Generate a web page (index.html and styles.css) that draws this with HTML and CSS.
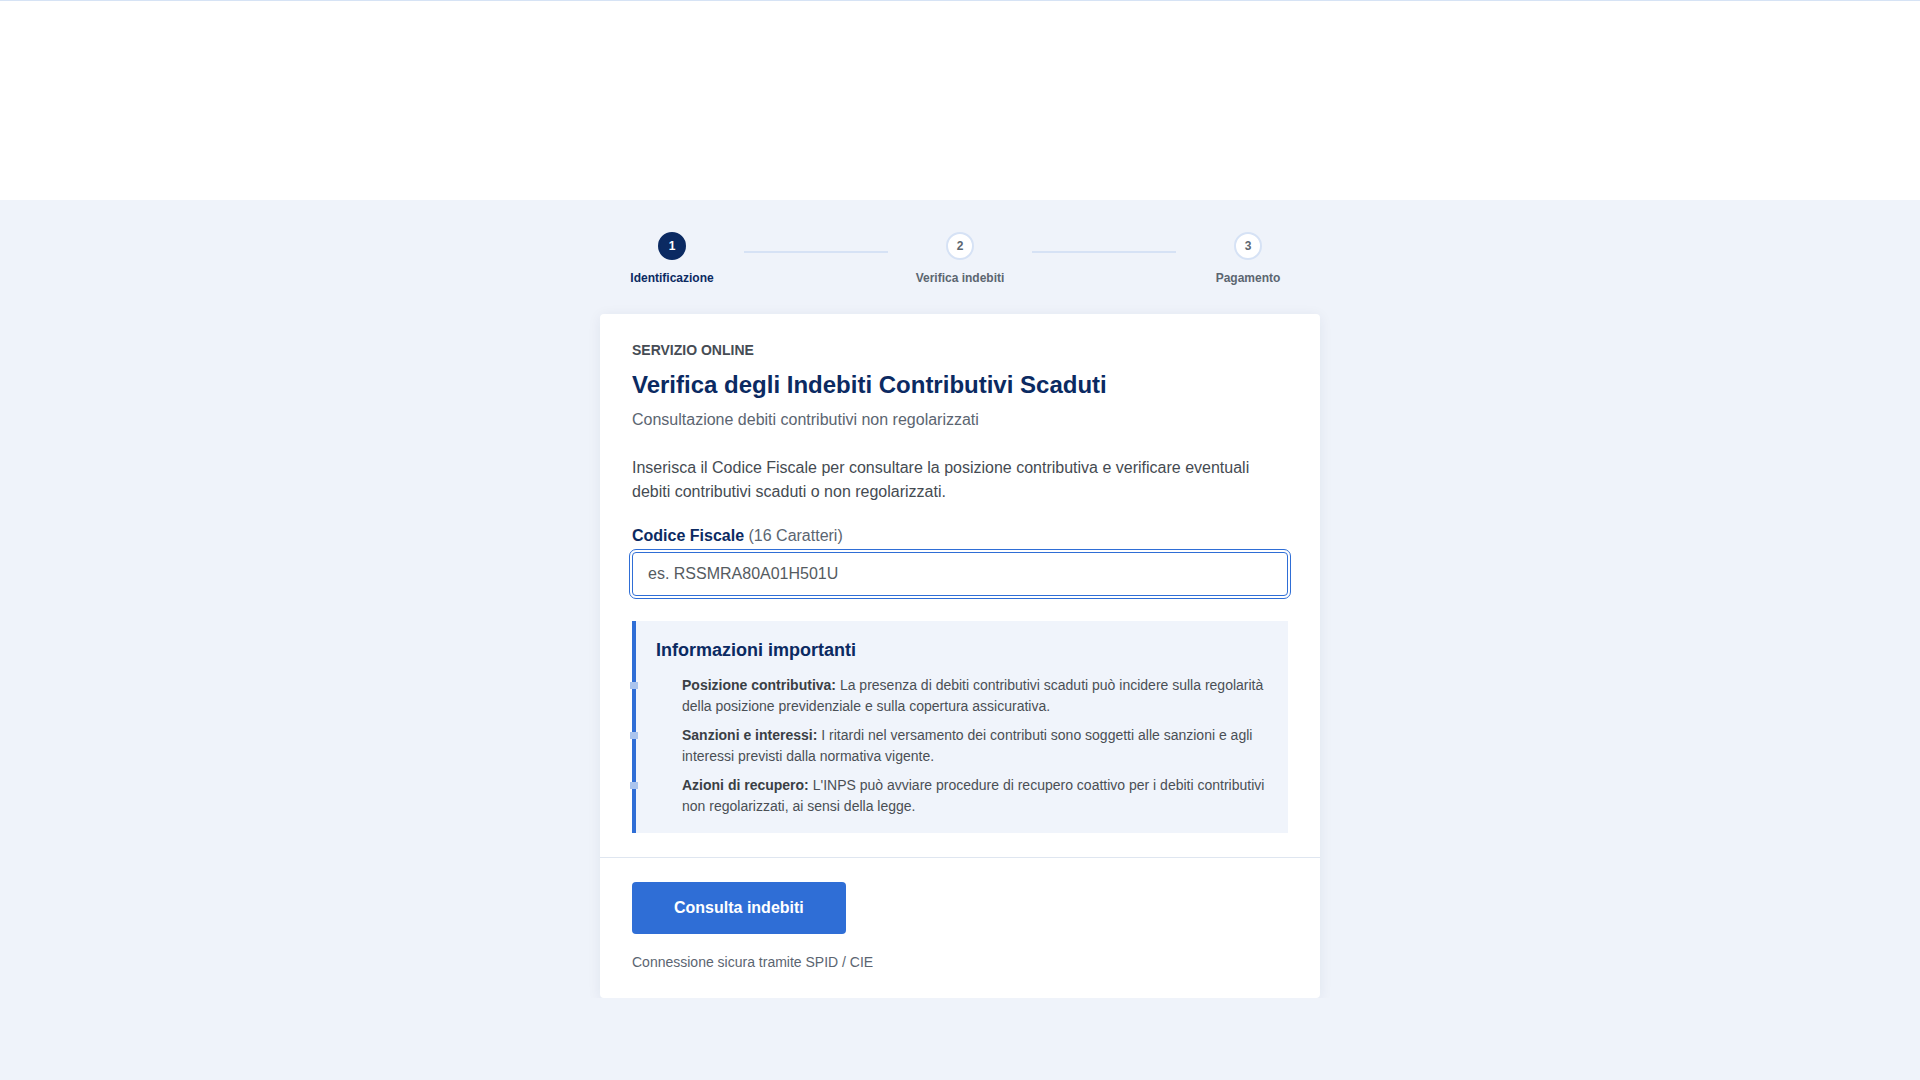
FILE: index.html
```html
<!DOCTYPE html>
<html lang="it">
<head>
    <meta charset="UTF-8">
    <meta name="viewport" content="width=device-width, initial-scale=1.0">
    <title>Verifica Indebiti Contributivi</title>
    <link rel="stylesheet" href="styles.css">
</head>
<body>
    <header class="topbar"></header>

    <main class="page">
        <ol class="stepper">
            <li class="step active">
                <span class="step-num">1</span>
                <span class="step-label">Identificazione</span>
            </li>
            <li class="step-line"></li>
            <li class="step">
                <span class="step-num">2</span>
                <span class="step-label">Verifica indebiti</span>
            </li>
            <li class="step-line"></li>
            <li class="step">
                <span class="step-num">3</span>
                <span class="step-label">Pagamento</span>
            </li>
        </ol>

        <section class="card">
            <div class="card-body">
                <p class="eyebrow">SERVIZIO ONLINE</p>
                <h1>Verifica degli Indebiti Contributivi Scaduti</h1>
                <p class="subtitle">Consultazione debiti contributivi non regolarizzati</p>

                <p class="intro">Inserisca il Codice Fiscale per consultare la posizione contributiva e verificare eventuali debiti contributivi scaduti o non regolarizzati.</p>

                <form id="cf-form" onsubmit="return false;">
                    <label for="cf">Codice Fiscale <span class="hint">(16 Caratteri)</span></label>
                    <input type="text" id="cf" name="cf" maxlength="16" placeholder="es. RSSMRA80A01H501U">
                </form>

                <div class="notice">
                    <h2>Informazioni importanti</h2>
                    <ul>
                        <li><strong>Posizione contributiva:</strong> La presenza di debiti contributivi scaduti può incidere sulla regolarità della posizione previdenziale e sulla copertura assicurativa.</li>
                        <li><strong>Sanzioni e interessi:</strong> I ritardi nel versamento dei contributi sono soggetti alle sanzioni e agli interessi previsti dalla normativa vigente.</li>
                        <li><strong>Azioni di recupero:</strong> L'INPS può avviare procedure di recupero coattivo per i debiti contributivi non regolarizzati, ai sensi della legge.</li>
                    </ul>
                </div>
            </div>

            <div class="card-footer">
                <button type="submit" form="cf-form">Consulta indebiti</button>
                <p class="secure">Connessione sicura tramite SPID / CIE</p>
            </div>
        </section>
    </main>
</body>
</html>
```

FILE: styles.css
```css
body {
    margin: 0;
    font-family: "Liberation Sans", Arial, sans-serif;
    background-color: #eff3fa;
    color: #454b52;
}
.topbar {
    height: 199px;
    background-color: #fff;
    border-top: 1px solid #d6e3f5;
}
.page {
    padding-top: 32px;
}

/* steps */
.stepper {
    display: flex;
    width: 720px;
    margin: 0 auto 28px;
    padding: 0;
    list-style: none;
}
.step {
    width: 144px;
    display: flex;
    flex-direction: column;
    align-items: center;
}
.step-num {
    width: 24px;
    height: 24px;
    border: 2px solid #d6e2f5;
    border-radius: 50%;
    background-color: #fff;
    color: #5c6670;
    font-size: 12px;
    font-weight: bold;
    line-height: 24px;
    text-align: center;
}
.step-label {
    margin-top: 10px;
    font-size: 12px;
    font-weight: bold;
    line-height: 16px;
    color: #5c6670;
}
.step.active .step-num {
    background-color: #0b2a62;
    border-color: #0b2a62;
    color: #fff;
}
.step.active .step-label {
    color: #0b2a62;
}
.step-line {
    flex: 1;
    height: 2px;
    margin-top: 19px;
    background-color: #d6e2f5;
}

/* card */
.card {
    width: 720px;
    margin: 0 auto;
    background-color: #fff;
    border-radius: 4px;
    box-shadow: 0 2px 14px rgba(20, 40, 80, 0.07);
}
.card-body {
    padding: 26px 32px 24px;
    border-bottom: 1px solid #dfe6f0;
}
.eyebrow {
    margin: 0;
    font-size: 14px;
    font-weight: bold;
    line-height: 20px;
    color: #464c54;
}
h1 {
    margin: 9px 0 0;
    font-size: 24px;
    line-height: 32px;
    color: #0b2a62;
}
.subtitle {
    margin: 7px 0 0;
    font-size: 16px;
    line-height: 24px;
    color: #5b6571;
}
.intro {
    margin: 24px 0 0;
    font-size: 16px;
    line-height: 24px;
    color: #454b52;
}
form {
    margin-top: 20px;
}
label {
    display: block;
    margin-bottom: 4px;
    font-size: 16px;
    font-weight: bold;
    line-height: 24px;
    color: #0b2a62;
}
label .hint {
    font-weight: normal;
    color: #5b6571;
}
input {
    display: block;
    width: 100%;
    height: 44px;
    box-sizing: border-box;
    padding: 0 15px;
    border: 1px solid #2f6ed6;
    border-radius: 4px;
    outline: 1px solid #2f6ed6;
    outline-offset: 2px;
    font-family: inherit;
    font-size: 16px;
    color: #454b52;
}
input::placeholder {
    color: #555b61;
}

/* info box */
.notice {
    margin-top: 25px;
    padding: 16px 20px;
    background-color: #f0f4fb;
    border-left: 4px solid #2f6ed6;
}
.notice h2 {
    margin: 0;
    font-size: 18px;
    line-height: 27px;
    color: #0b2a62;
}
.notice ul {
    margin: 11px 0 0;
    padding-left: 26px;
    list-style: none;
}
.notice li {
    position: relative;
    font-size: 14px;
    line-height: 21px;
    color: #4a4f55;
}
.notice li + li {
    margin-top: 8px;
}
.notice li::before {
    content: "";
    position: absolute;
    left: -52px;
    top: 7px;
    width: 8px;
    height: 7px;
    background-color: #aac4ee;
}
.notice strong {
    color: #3a3f45;
}

/* footer */
.card-footer {
    padding: 24px 32px 25px;
}
button {
    padding: 16px 42px;
    border: none;
    border-radius: 4px;
    background-color: #2f6ed6;
    color: #fff;
    font-family: inherit;
    font-size: 16px;
    font-weight: bold;
    line-height: 20px;
    cursor: pointer;
}
button:hover {
    background-color: #2559b0;
}
.secure {
    margin: 18px 0 0;
    font-size: 14px;
    line-height: 21px;
    color: #5b6571;
}
```
